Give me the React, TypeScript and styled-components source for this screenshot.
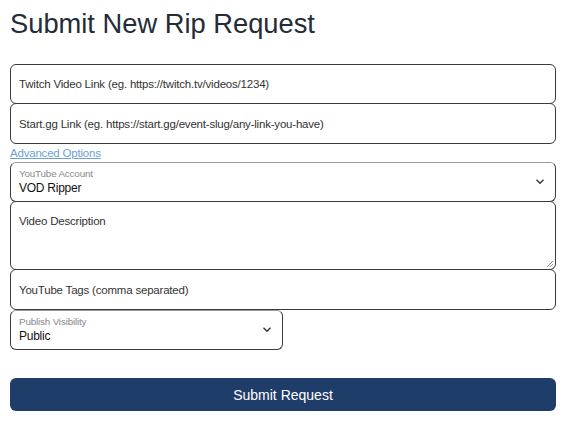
import React from "react";
import styled, { createGlobalStyle } from "styled-components";

const Global = createGlobalStyle`
  html, body { margin: 0; padding: 0; background: #fff; }
  body { font-family: "Liberation Sans", Arial, sans-serif; color: #222; }
  * { box-sizing: border-box; }
`;

const Page = styled.div`
  padding: 0 12px 0 10px;
`;

const Title = styled.h1`
  margin: 0;
  padding-top: 8px;
  height: 65px;
  font-size: 27.3px;
  font-weight: 400;
  color: #252c38;
`;

const Form = styled.form`
  display: flex;
  flex-direction: column;
`;

const Field = styled.div<{ $h: number; $half?: boolean }>`
  height: ${(p) => p.$h}px;
  width: ${(p) => (p.$half ? "273px" : "100%")};
  border: 1px solid #3a3a3a;
  border-radius: 6px;
  background: #fff;
  position: relative;
  display: flex;
  flex-direction: column;
  justify-content: ${(p) => (p.$h > 50 ? "flex-start" : "center")};
  padding: ${(p) => (p.$h > 50 ? "13px 8px" : "0 8px")};
  font-size: 11.5px;
  letter-spacing: -0.2px;
  color: #333;
  margin-top: -1px;
`;

const SelectBox = styled(Field)`
  justify-content: flex-start;
  padding: 5px 8px 0;
  border-top-color: #9a9a9a;
`;

const SmallLabel = styled.div`
  font-size: 9.8px;
  letter-spacing: -0.15px;
  color: #888;
  line-height: 12px;
`;

const Value = styled.div`
  font-size: 12px;
  letter-spacing: -0.25px;
  color: #111;
  line-height: 15px;
  margin-top: 1px;
`;

const Chevron = styled.svg`
  position: absolute;
  right: 10px;
  top: 50%;
  margin-top: -4px;
`;

const Grip = styled.svg`
  position: absolute;
  right: 1px;
  bottom: 1px;
`;

const AdvLink = styled.a`
  font-size: 11.5px;
  letter-spacing: -0.2px;
  color: #6e9fd6;
  text-decoration: underline;
  line-height: 17px;
  height: 18px;
  margin-top: 1px;
  align-self: flex-start;
`;

const Submit = styled.button`
  margin-top: 28px;
  height: 33px;
  width: 100%;
  border: none;
  border-radius: 6px;
  background: #1f3d69;
  color: #fff;
  font-family: "Liberation Sans", Arial, sans-serif;
  font-size: 14px;
`;

const Chev = () => (
  <Chevron width="10" height="7" viewBox="0 0 10 7">
    <path d="M1.5 1.8 L5 5.2 L8.5 1.8" fill="none" stroke="#333" strokeWidth="1.4" />
  </Chevron>
);

export default function App() {
  return (
    <Page>
      <Global />
      <Title>Submit New Rip Request</Title>
      <Form>
        <Field $h={40}>Twitch Video Link (eg. https://twitch.tv/videos/1234)</Field>
        <Field $h={41}>Start.gg Link (eg. https://start.gg/event-slug/any-link-you-have)</Field>
        <AdvLink href="#">Advanced Options</AdvLink>
        <SelectBox $h={40}>
          <SmallLabel>YouTube Account</SmallLabel>
          <Value>VOD Ripper</Value>
          <Chev />
        </SelectBox>
        <Field $h={69}>
          Video Description
          <Grip width="8" height="8" viewBox="0 0 8 8">
            <path d="M7 1 L1 7 M7 4 L4 7" stroke="#999" strokeWidth="1" />
          </Grip>
        </Field>
        <Field $h={41}>YouTube Tags (comma separated)</Field>
        <SelectBox $h={40} $half style={{ marginTop: 0 }}>
          <SmallLabel>Publish Visibility</SmallLabel>
          <Value>Public</Value>
          <Chev />
        </SelectBox>
        <Submit type="button">Submit Request</Submit>
      </Form>
    </Page>
  );
}
